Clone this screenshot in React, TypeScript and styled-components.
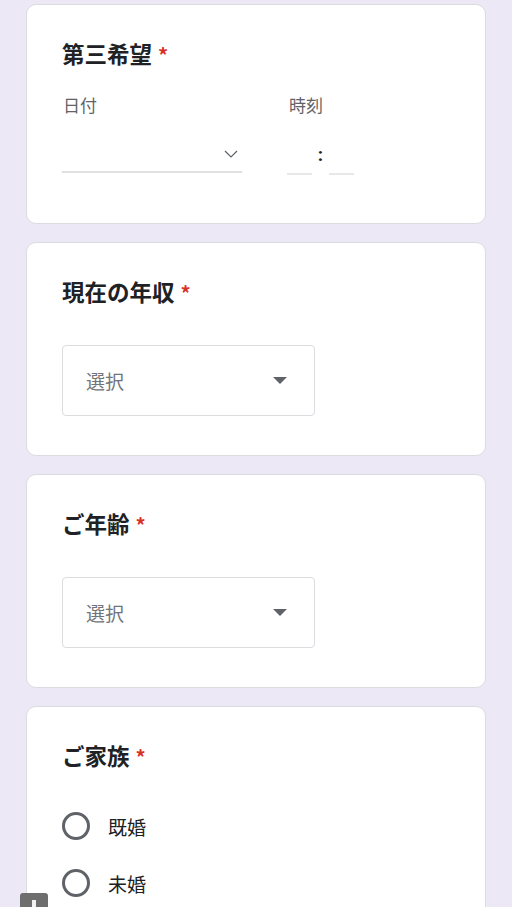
import React from "react";
import styled, { createGlobalStyle } from "styled-components";

const GlobalStyle = createGlobalStyle`
  html, body {
    margin: 0;
    padding: 0;
    background: #ede8f6;
  }
  body {
    font-family: "Noto Sans CJK JP", Roboto, "Noto Sans", sans-serif;
    color: #202124;
  }
`;

const Page = styled.div`
  display: flex;
  flex-direction: column;
  gap: 18px;
  padding: 4px 26px 40px;
`;

const Card = styled.section<{ $pb?: number }>`
  background: #ffffff;
  border: 1px solid #dadce0;
  border-radius: 10px;
  padding: 33px 35px ${(p) => p.$pb ?? 39}px;
`;

const Title = styled.h2`
  margin: 0;
  font-size: 22.5px;
  line-height: 30px;
  font-weight: 700;
  color: #202124;
  letter-spacing: 0;
`;

const Req = styled.span`
  color: #d93025;
  margin-left: 6px;
  font-weight: 700;
  font-size: 20px;
`;

const FieldRow = styled.div`
  display: flex;
  gap: 46px;
  margin-top: 23px;
`;

const FieldCol = styled.div<{ $w: number }>`
  display: flex;
  flex-direction: column;
  width: ${(p) => p.$w}px;
`;

const FieldLabel = styled.div`
  font-size: 17px;
  line-height: 24px;
  color: #5f6368;
  padding-left: 1px;
`;

const DateInput = styled.div`
  margin-top: 20px;
  height: 34px;
  border-bottom: 2px solid #e0e0e0;
  display: flex;
  align-items: center;
  justify-content: flex-end;
  padding-right: 4px;
`;

const TimeWrap = styled.div`
  margin-top: 20px;
  display: flex;
  align-items: flex-end;
  margin-left: -1px;
`;

const TimeBox = styled.div`
  width: 25px;
  height: 36px;
  border-bottom: 2px solid #e8e8e8;
`;

const Colon = styled.div`
  width: 17px;
  height: 36px;
  display: flex;
  align-items: center;
  justify-content: center;
  font-family: Roboto, sans-serif;
  font-weight: 700;
  font-size: 19px;
  color: #202124;
  padding-bottom: 6px;
  box-sizing: border-box;
`;

const Select = styled.div`
  margin-top: 37px;
  width: 253px;
  height: 71px;
  box-sizing: border-box;
  border: 1px solid #dadce0;
  border-radius: 4px;
  display: flex;
  align-items: center;
  justify-content: space-between;
  padding: 0 27px 0 23px;
`;

const SelectText = styled.span`
  font-size: 19px;
  color: #70757a;
`;

const RadioList = styled.div`
  display: flex;
  flex-direction: column;
  gap: 29px;
  margin-top: 40px;
`;

const RadioRow = styled.label`
  display: flex;
  align-items: center;
  gap: 18px;
  height: 28px;
`;

const RadioCircle = styled.span`
  width: 28px;
  height: 28px;
  box-sizing: border-box;
  border: 3px solid #5f6368;
  border-radius: 50%;
  flex-shrink: 0;
`;

const RadioText = styled.span`
  font-size: 19px;
  color: #202124;
`;

const FloatTab = styled.div`
  position: fixed;
  left: 20px;
  top: 893px;
  width: 28px;
  height: 20px;
  background: #6e6e6e;
  border-radius: 3px 3px 0 0;
  display: flex;
  justify-content: center;
  padding-top: 7px;
  box-sizing: border-box;
`;

const FloatMark = styled.span`
  width: 4px;
  height: 8px;
  background: #f2f2f2;
`;

const Chevron = () => (
  <svg width="14" height="8" viewBox="0 0 14 8" fill="none">
    <path d="M1 1 L7 7 L13 1" stroke="#5f6368" strokeWidth="1.2" />
  </svg>
);

const Caret = () => (
  <svg width="14" height="7" viewBox="0 0 14 7">
    <path d="M0 0 H14 L7 7 Z" fill="#5f6368" />
  </svg>
);

const SelectQuestion = ({ title }: { title: string }) => (
  <Card>
    <Title>
      {title}
      <Req>*</Req>
    </Title>
    <Select>
      <SelectText>選択</SelectText>
      <Caret />
    </Select>
  </Card>
);

export default function App() {
  return (
    <>
      <GlobalStyle />
      <Page>
        <Card $pb={48}>
          <Title>
            第三希望
            <Req>*</Req>
          </Title>
          <FieldRow>
            <FieldCol $w={180}>
              <FieldLabel>日付</FieldLabel>
              <DateInput>
                <Chevron />
              </DateInput>
            </FieldCol>
            <FieldCol $w={70}>
              <FieldLabel>時刻</FieldLabel>
              <TimeWrap>
                <TimeBox />
                <Colon>:</Colon>
                <TimeBox />
              </TimeWrap>
            </FieldCol>
          </FieldRow>
        </Card>
        <SelectQuestion title="現在の年収" />
        <SelectQuestion title="ご年齢" />
        <Card>
          <Title>
            ご家族
            <Req>*</Req>
          </Title>
          <RadioList>
            <RadioRow>
              <RadioCircle />
              <RadioText>既婚</RadioText>
            </RadioRow>
            <RadioRow>
              <RadioCircle />
              <RadioText>未婚</RadioText>
            </RadioRow>
          </RadioList>
        </Card>
      </Page>
      <FloatTab>
        <FloatMark />
      </FloatTab>
    </>
  );
}
